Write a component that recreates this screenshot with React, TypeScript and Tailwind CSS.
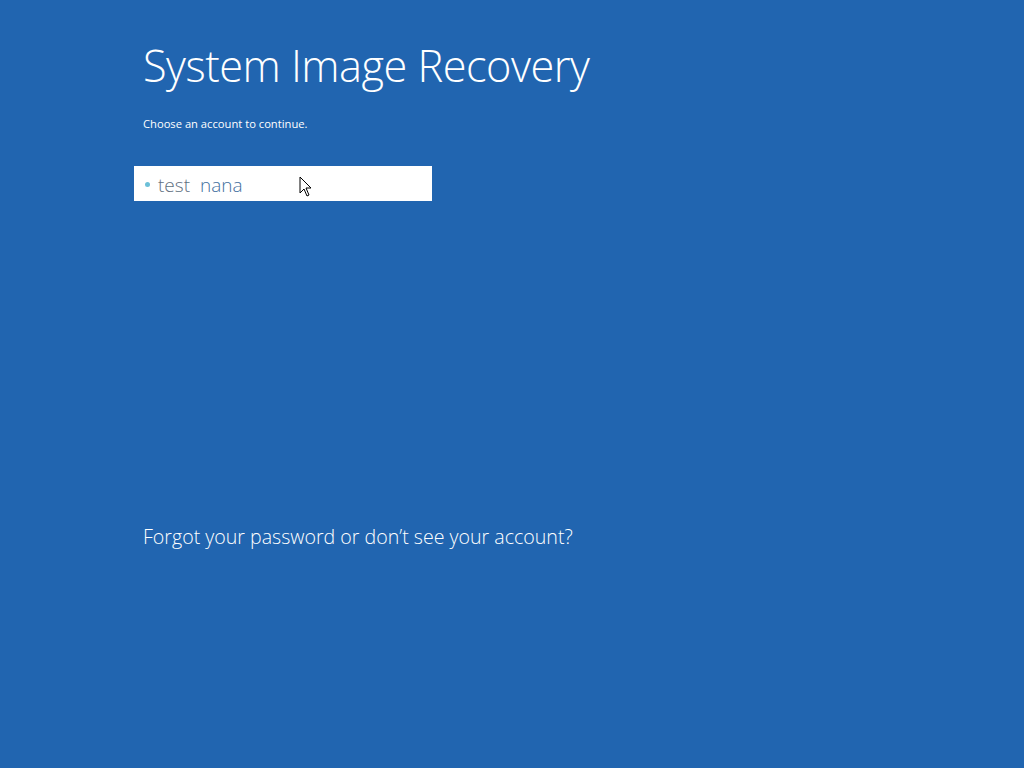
export default function App() {
  return (
    <div
      className="relative h-[768px] w-[1024px] overflow-hidden bg-[#2165b0] text-white"
      style={{ fontFamily: '"Open Sans", "Noto Sans", sans-serif' }}
    >
      <div className="flex flex-col pl-[143px] pt-[36px]">
        <h1 className="text-[43.3px] font-light leading-[60px] tracking-[-0.5px]">System Image Recovery</h1>
        <p className="mt-[20px] text-[11.2px] leading-[16px]">Choose an account to continue.</p>
        <div className="-ml-[9px] mt-[34px] flex h-[35px] w-[298px] items-center bg-white pl-[11px] pt-[3px]">
          <span className="mt-[-2px] h-[5px] w-[5px] rounded-full bg-[#6cc0d8]" />
          <span className="ml-[8px] text-[19px] font-light text-[#5f6f80]">test</span>
          <span className="ml-[10px] text-[19px] font-light text-[#3f6f9e]">nana</span>
        </div>
        <p className="mt-[321px] text-[19.6px] font-light leading-[30px]">
          Forgot your password or don’t see your account?
        </p>
      </div>
      <svg className="absolute left-[299px] top-[176px]" width="14" height="22" viewBox="0 0 14 22">
        <path d="M1 1 L1 17 L5 13 L8 20 L10 19 L7 12 L12 12 Z" fill="#fff" stroke="#000" strokeWidth="1" strokeLinejoin="round" />
      </svg>
    </div>
  );
}
